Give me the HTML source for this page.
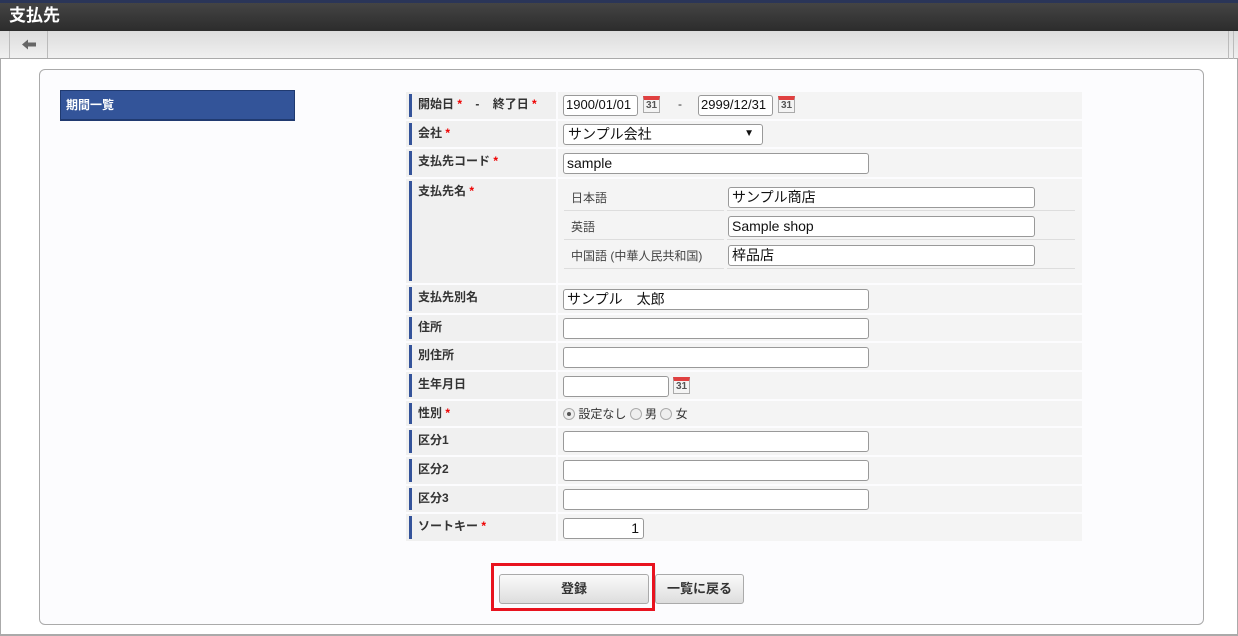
<!DOCTYPE html>
<html><head><meta charset="utf-8"><style>
*{box-sizing:border-box;margin:0;padding:0}
body{width:1238px;height:636px;position:relative;background:#fff;font-family:"Liberation Sans","Noto Sans CJK JP",sans-serif;overflow:hidden;color:#333}
.a{position:absolute}
#frame{left:0;top:0;width:1238px;height:636px;border-left:1px solid #aaa;border-right:1px solid #aaa;border-bottom:2px solid #aaa}
#hdr{left:0;top:0;width:1238px;height:31px;background:linear-gradient(#444,#2c2c2c);border-top:3px solid #2a3558;color:#fff;font-weight:bold;font-size:17px;line-height:26px;padding:0 0 0 9px}
#tb{left:0;top:31px;width:1238px;height:28px;background:linear-gradient(#dcdcdc,#f0f0f0);border-bottom:1px solid #aaa}
#back{left:9px;top:31px;width:39px;height:27px;border-left:1px solid #bbb;border-right:1px solid #bbb}
#panel{left:39px;top:69px;width:1165px;height:556px;border:1px solid #aaa;border-radius:6px;background:#fcfcfe}
#side{left:60px;top:90px;width:235px;height:31px;background:#335499;border:1px solid #203a70;border-bottom:2px solid #203a70;color:#fff;font-weight:bold;font-size:12px;padding:5px 0 0 5px}
.lb{background:#f0f0f0;left:406px;width:150px;font-weight:bold;font-size:12px;padding:3px 0 0 12px;color:#333}
.lb:before{content:"";position:absolute;left:3px;top:2px;bottom:2px;width:3px;background:#34539a}
.vl{background:#f4f4f4;left:558px;width:524px}
.r{color:#e00}
.in{position:absolute;background:#fff;border:1px solid #999;border-radius:3px;height:21px;font-size:14px;line-height:18px;padding:0 0 0 3px;color:#111}
.cal{position:absolute;width:17px;height:17px;border:1px solid #aaa;border-top:4px solid #e04040;background:#f4f4f4;font-size:10px;font-weight:bold;color:#555;text-align:center;line-height:12px}
.sl{position:absolute;left:571px;font-size:12px;color:#444}
.hr{position:absolute;height:1px;background:#ddd}
.rad{display:inline-block;width:12px;height:12px;border:1px solid #aaa;border-radius:50%;background:#eee;vertical-align:-2px;position:relative}
.btn{position:absolute;border:1px solid #aaa;border-radius:3px;background:linear-gradient(#fafafa,#ddd);font-size:13px;font-weight:bold;text-align:center;color:#333;line-height:28px}
</style></head><body>
<div class="a" id="frame"></div>
<div class="a" id="hdr">支払先</div>
<div class="a" id="tb"></div>
<div class="a" id="back"><svg width="39" height="27"><path d="M12 13.5l6-5v3h8v4h-8v3z" fill="#666"/></svg></div>
<div class="a" style="left:1228px;top:31px;width:6px;height:28px;border-left:1px solid #bbb;border-right:1px solid #bbb"></div>
<div class="a" id="panel"></div>
<div class="a" id="side">期間一覧</div>

<div class="a lb" style="top:92px;height:27px">開始日<span class="r"> *</span>&nbsp;&nbsp;&nbsp;&nbsp;-&nbsp;&nbsp;&nbsp;&nbsp;終了日<span class="r"> *</span></div>
<div class="a vl" style="top:92px;height:27px"></div>
<div class="in" style="left:563px;top:95px;width:75px;font-size:13px;padding-left:2px">1900/01/01</div>
<div class="cal" style="left:643px;top:96px">31</div>
<div class="a" style="left:678px;top:97px;font-size:12px">-</div>
<div class="in" style="left:698px;top:95px;width:75px;font-size:13px;padding-left:2px">2999/12/31</div>
<div class="cal" style="left:778px;top:96px">31</div>

<div class="a lb" style="top:121px;height:26px">会社<span class="r"> *</span></div>
<div class="a vl" style="top:121px;height:26px"></div>
<div class="in" style="left:563px;top:124px;width:200px;padding-left:4px">サンプル会社<span style="position:absolute;right:8px;top:0;font-size:10px">▼</span></div>

<div class="a lb" style="top:149px;height:28px">支払先コード<span class="r"> *</span></div>
<div class="a vl" style="top:149px;height:28px"></div>
<div class="in" style="left:563px;top:153px;width:306px">sample</div>

<div class="a lb" style="top:179px;height:104px">支払先名<span class="r"> *</span></div>
<div class="a vl" style="top:179px;height:104px"></div>
<div class="sl" style="top:189px">日本語</div>
<div class="in" style="left:728px;top:187px;width:307px">サンプル商店</div>
<div class="hr" style="left:564px;top:210px;width:160px"></div><div class="hr" style="left:727px;top:210px;width:348px"></div>
<div class="sl" style="top:218px">英語</div>
<div class="in" style="left:728px;top:216px;width:307px">Sample shop</div>
<div class="hr" style="left:564px;top:239px;width:160px"></div><div class="hr" style="left:727px;top:239px;width:348px"></div>
<div class="sl" style="top:247px">中国語 (中華人民共和国)</div>
<div class="in" style="left:728px;top:245px;width:307px">梓品店</div>
<div class="hr" style="left:564px;top:268px;width:160px"></div><div class="hr" style="left:727px;top:268px;width:348px"></div>

<div class="a lb" style="top:285px;height:28px">支払先別名</div>
<div class="a vl" style="top:285px;height:28px"></div>
<div class="in" style="left:563px;top:289px;width:306px">サンプル　太郎</div>

<div class="a lb" style="top:315px;height:26px">住所</div>
<div class="a vl" style="top:315px;height:26px"></div>
<div class="in" style="left:563px;top:318px;width:306px"></div>

<div class="a lb" style="top:343px;height:27px">別住所</div>
<div class="a vl" style="top:343px;height:27px"></div>
<div class="in" style="left:563px;top:347px;width:306px"></div>

<div class="a lb" style="top:372px;height:27px">生年月日</div>
<div class="a vl" style="top:372px;height:27px"></div>
<div class="in" style="left:563px;top:376px;width:106px"></div>
<div class="cal" style="left:673px;top:377px">31</div>

<div class="a lb" style="top:401px;height:25px">性別<span class="r"> *</span></div>
<div class="a vl" style="top:401px;height:25px"></div>
<div class="a" style="left:563px;top:405px;font-size:12px;color:#333"><span class="rad"><span style="position:absolute;left:3px;top:3px;width:4px;height:4px;border-radius:50%;background:#555"></span></span> 設定なし <span class="rad"></span> 男 <span class="rad"></span> 女</div>

<div class="a lb" style="top:428px;height:27px">区分1</div>
<div class="a vl" style="top:428px;height:27px"></div>
<div class="in" style="left:563px;top:431px;width:306px"></div>

<div class="a lb" style="top:457px;height:27px">区分2</div>
<div class="a vl" style="top:457px;height:27px"></div>
<div class="in" style="left:563px;top:460px;width:306px"></div>

<div class="a lb" style="top:486px;height:26px">区分3</div>
<div class="a vl" style="top:486px;height:26px"></div>
<div class="in" style="left:563px;top:489px;width:306px"></div>

<div class="a lb" style="top:514px;height:27px">ソートキー<span class="r"> *</span></div>
<div class="a vl" style="top:514px;height:27px"></div>
<div class="in" style="left:563px;top:518px;width:81px;text-align:right;padding-right:4px">1</div>

<div class="a" style="left:491px;top:563px;width:164px;height:48px;border:3px solid #e8131f"></div>
<div class="btn" style="left:499px;top:574px;width:150px;height:30px">登録</div>
<div class="btn" style="left:655px;top:574px;width:89px;height:30px">一覧に戻る</div>
</body></html>
